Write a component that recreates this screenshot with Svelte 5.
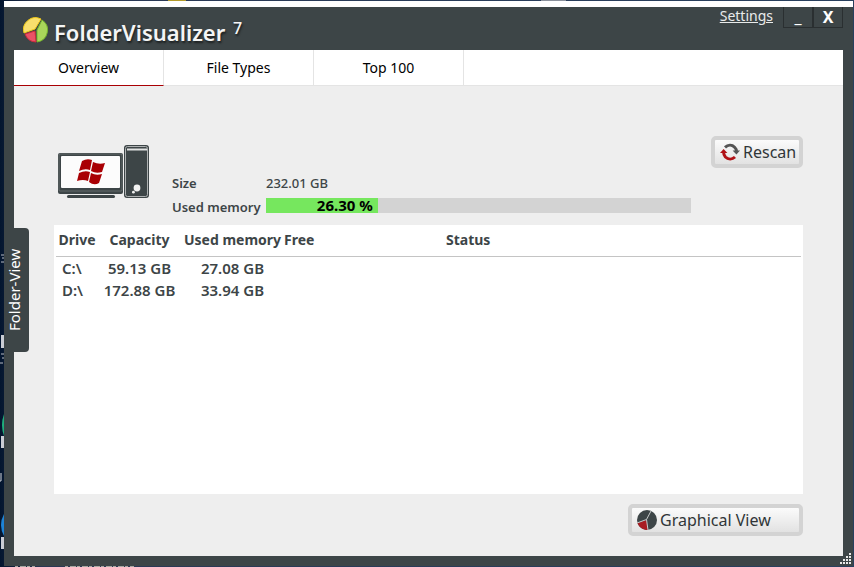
<script lang="ts">
  type Drive = {
    name: string;
    capacity: number;
    used: number;
  };

  let drives: Drive[] = [
    { name: "C:\\", capacity: 59.13, used: 27.08 },
    { name: "D:\\", capacity: 172.88, used: 33.94 },
  ];
  let tabs = ["Overview", "File Types", "Top 100"];
  let active = "Overview";

  $: total = drives.reduce((sum, curr) => sum + curr.capacity, 0);
  $: used = drives.reduce((sum, curr) => sum + curr.used, 0);
  $: percent = (used / total) * 100;
</script>

<div class="desktop">
  <svg class="shortcuts" width="600" height="567" viewBox="0 0 600 567" aria-hidden="true">
    <path d="M168 0h18v1h-18z" fill="#b39b2c" />
    <path d="M541 0h25v1h-25z" fill="#8b919c" />
    <path d="M1 255h3M2 258h2M1 262h3M1 354h3M2 358h2M0 363h3" stroke="#b9bdc6" />
    <path d="M1 335h3v13h-3zM1 436h3v12h-3zM1 537h3v12h-3z" fill="#c9ccd4" />
    <path d="M4 414q-4 11 0 22z" fill="#1fae7d" />
    <path d="M4 514q-6 11 0 22z" fill="#1d83d6" />
    <path d="M1 473v8h-1" stroke="#d5d8e0" fill="none" />
    <path d="M15 566.5h20M65 566.5h69" stroke="#a9a9a4" stroke-dasharray="3 2 6 1" />
  </svg>
  <div class="strip"></div>
  <div class="window">
    <header>
      <svg class="logo" width="26" height="26" viewBox="0 0 26 26" aria-hidden="true">
        <path d="M12 12L1 16A12 12 0 0 1 18 2z" fill="#f9df6d" stroke="#f3cb18" />
        <path d="M14 13L19 3A12 12 0 0 1 14 25z" fill="#a9d65a" stroke="#75b52c" />
        <path d="M12 14L13 25A12 12 0 0 1 2 17z" fill="#ea5266" stroke="#cf2a3d" />
      </svg>
      <h1>FolderVisualizer <sup>7</sup></h1>
      <a class="settings" href="#settings">Settings</a>
      <div class="controls">
        <button class="minimize" aria-label="Minimize">_</button>
        <button class="close" aria-label="Close">X</button>
      </div>
    </header>

    <nav>
      {#each tabs as tab}
        <button class:active={tab === active} on:click={() => (active = tab)}>{tab}</button>
      {/each}
    </nav>

    <main>
      <section class="summary">
        <svg width="92" height="56" viewBox="0 0 92 56" aria-hidden="true">
          <rect x="0" y="8" width="65" height="41" rx="2" fill="#3d4547" />
          <rect x="1" y="9" width="63" height="37" rx="1" fill="none" stroke="#7d8384" stroke-width="0.6" />
          <rect x="3" y="11" width="59" height="32" rx="1" fill="#fcfcfc" />
          <rect x="9" y="50" width="48" height="3" rx="1.5" fill="#3d4547" />
          <rect x="66" y="0" width="25" height="53" rx="3" fill="#3d4547" />
          <rect x="67.5" y="1.5" width="22" height="50" rx="2" fill="none" stroke="#aeb1b2" />
          <path d="M69 4.500h20" stroke="#e1e2e2" stroke-width="2" />
          <circle cx="79" cy="43" r="3.4" fill="#f2f2f2" />
          <circle cx="75.4" cy="47.2" r="1.4" fill="#f2f2f2" />
          <g fill="#a90004">
            <path d="M24 16q5-3 10-1l-2 10q-5-2-11 1z" />
            <path d="M35 17q6 3 12 1l-3 9q-6 2-11-1z" />
            <path d="M21 28q6-3 11-1l-2 9q-5-2-11 0z" />
            <path d="M33 28q5 3 11 1l-3 9q-5 3-10-1z" />
          </g>
        </svg>
        <dl>
          <dt>Size</dt>
          <dd>{total.toFixed(2)} GB</dd>
          <dt>Used memory</dt>
          <dd class="bar">
            <div class="fill" style="width: {percent}%">{percent.toFixed(2)} %</div>
          </dd>
        </dl>
        <button class="action rescan">
          <svg width="20" height="18" viewBox="0 0 20 18" aria-hidden="true">
            <path d="M5 4.4C8 1.6 12 1.6 14.6 4.2Q16.4 6 16.4 8" fill="none" stroke="#555" stroke-width="3" />
            <path d="M12.6 7.5H20L16.4 11.5z" fill="#555" />
            <path d="M15 14C12 16.8 8 16.6 5.4 14Q3.6 12 3.6 9" fill="none" stroke="#b01116" stroke-width="3" />
            <path d="M0 10L3.6 6L7.4 10z" fill="#b01116" />
          </svg>
          Rescan
        </button>
      </section>

      <section class="panel">
        <table>
          <thead>
            <tr>
              <th class="drive">Drive</th>
              <th class="capacity">Capacity</th>
              <th class="used">Used memory</th>
              <th class="free">Free</th>
              <th class="status">Status</th>
            </tr>
          </thead>
          <tbody>
            {#each drives as drive}
              <tr>
                <td class="name">{drive.name}</td>
                <td>{drive.capacity.toFixed(2)} GB</td>
                <td>{drive.used.toFixed(2)} GB</td>
                <td></td>
                <td></td>
              </tr>
            {/each}
          </tbody>
        </table>
      </section>

      <footer>
        <button class="action graph">
          <svg width="20" height="20" viewBox="0 0 20 20" aria-hidden="true">
            <circle cx="10" cy="10" r="10" fill="#3d4547" />
            <path d="M9.5 10L0.5 13A10 10 0 0 0 11 20z" fill="#a81c22" />
            <path d="M14 1L9.5 9.5L0 13M9.5 9.5L11 20" fill="none" stroke="#c9cccc" />
          </svg>
          Graphical View
        </button>
      </footer>
    </main>

    <button class="folder-view">Folder-View</button>
    <svg class="grip" width="12" height="12" viewBox="0 0 12 12" aria-hidden="true">
      <path
        d="M9 0h2v2h-2zM6 3h2v2h-2zM9 3h2v2h-2zM3 6h2v2h-2zM6 6h2v2h-2zM9 6h2v2h-2zM0 9h2v2h-2zM3 9h2v2h-2zM6 9h2v2h-2zM9 9h2v2h-2z"
        fill="#e8e8e8"
      />
    </svg>
  </div>
</div>

<style>
  :global(body) {
    margin: 0;
  }
  .desktop {
    position: relative;
    box-sizing: border-box;
    min-height: 100vh;
    display: flex;
    flex-direction: column;
    padding: 1px 1px 1px 4px;
    background: linear-gradient(90deg, #03152f, #2b3854 5%, #28405e);
    color: #3d4547;
    font-family: "Segoe UI", "Noto Sans", sans-serif;
  }
  .shortcuts {
    position: absolute;
    left: 0;
    top: 0;
  }
  .strip {
    position: relative;
    height: 6px;
    background: #fff;
  }
  .window {
    position: relative;
    flex: 1;
    display: flex;
    flex-direction: column;
    padding: 0 10px 10px;
    background: #3d4547;
  }
  button {
    margin: 0;
    padding: 0;
    border: 0;
    font-family: inherit;
    cursor: pointer;
  }
  header {
    height: 43px;
    display: flex;
    align-items: flex-start;
  }
  .logo {
    margin: 10px 5px 0 9px;
  }
  h1 {
    flex: 1;
    margin: 10px 0 0;
    color: #f4f5f5;
    font-size: 22px;
    line-height: 30px;
    font-weight: 600;
    text-shadow: 1px 2px 2px #1c2021;
  }
  sup {
    margin-left: 2px;
    font-size: 16px;
    line-height: 16px;
    font-weight: 500;
    vertical-align: 7px;
  }
  .settings {
    margin-right: 10px;
    color: #e9ebeb;
    font-size: 14px;
    line-height: 18px;
  }
  .controls {
    display: flex;
  }
  .controls button {
    box-sizing: border-box;
    width: 30px;
    height: 21px;
    border: 1px solid #2a2f31;
    border-top: 0;
    background: none;
    color: #fff;
    font-size: 16px;
    line-height: 18px;
    font-weight: 700;
  }
  .controls .minimize {
    font-weight: 400;
  }
  nav {
    display: flex;
    background: #fff;
    border-bottom: 1px solid #e4e4e4;
  }
  nav button {
    box-sizing: border-box;
    width: 150px;
    height: 36px;
    margin-bottom: -1px;
    border-right: 1px solid #e4e4e4;
    border-bottom: 1px solid #e4e4e4;
    background: #fff;
    color: #000;
    font-size: 14px;
  }
  nav button.active {
    border-bottom-color: #a90004;
  }
  main {
    flex: 1;
    display: flex;
    flex-direction: column;
    padding: 50px 40px 20px;
    background: #eee;
  }
  .summary {
    display: flex;
    align-items: flex-start;
    height: 89px;
  }
  .summary > svg {
    margin: 9px 22px 0 4px;
  }
  dl {
    flex: 1;
    display: grid;
    grid-template-columns: 94px minmax(0, 425px);
    grid-auto-rows: 24px;
    align-items: center;
    margin: 35px 20px 0 0;
    font-size: 13px;
    font-weight: 500;
    white-space: nowrap;
  }
  dt {
    font-weight: 600;
  }
  dd {
    margin: 0;
  }
  .bar {
    height: 15px;
    margin-bottom: 4px;
    background: #d3d3d3;
  }
  .fill {
    box-sizing: border-box;
    height: 15px;
    padding-right: 5px;
    background: #76e75e;
    color: #000;
    font-size: 15px;
    line-height: 15px;
    font-weight: 700;
    text-align: right;
  }
  .action {
    box-sizing: border-box;
    height: 32px;
    display: flex;
    align-items: center;
    border: 4px solid #d3d3d3;
    border-radius: 5px;
    background: linear-gradient(#fbfbfb, #e2e2e2);
    color: #303638;
    font-size: 16px;
    line-height: 24px;
    white-space: nowrap;
  }
  .rescan {
    width: 92px;
    gap: 3px;
    padding-left: 5px;
  }
  .graph {
    width: 175px;
    gap: 3px;
    padding-left: 5px;
  }
  .action svg {
    flex: none;
  }
  .panel {
    flex: 1;
    min-height: 240px;
    padding: 0 2px;
    background: #fff;
  }
  table {
    width: 100%;
    table-layout: fixed;
    border-collapse: collapse;
    font-size: 14px;
    font-weight: 700;
    white-space: nowrap;
  }
  th {
    height: 29px;
    padding: 0 0 2px;
    border-bottom: 1px solid #c4c4c4;
  }
  td {
    height: 22px;
    padding: 0;
    font-size: 15px;
    font-weight: 600;
    line-height: 22px;
    text-align: center;
  }
  .name {
    padding-left: 6px;
    text-align: left;
  }
  .drive {
    width: 42px;
  }
  .capacity {
    width: 83px;
  }
  .used {
    width: 103px;
  }
  .free {
    width: 162px;
    text-align: left;
  }
  .status {
    text-align: left;
  }
  footer {
    display: flex;
    justify-content: flex-end;
    margin-top: 10px;
  }
  .folder-view {
    position: absolute;
    left: 0;
    top: 221px;
    width: 25px;
    height: 124px;
    padding-left: 5px;
    border-radius: 4px 0 0 4px;
    background: #3d4547;
    color: #fff;
    font-size: 15px;
    writing-mode: vertical-rl;
    transform: rotate(180deg);
  }
  .grip {
    position: absolute;
    right: 1px;
    bottom: 1px;
  }
</style>
